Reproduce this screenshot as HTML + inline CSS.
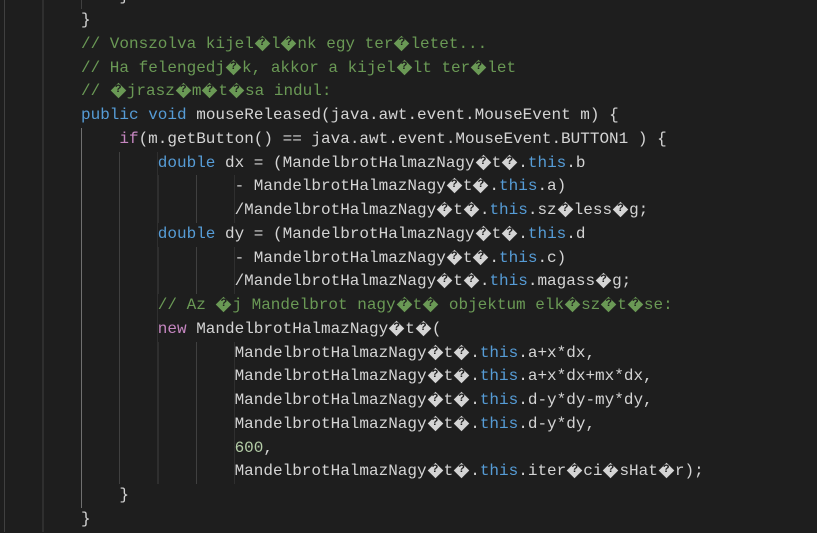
<!DOCTYPE html>
<html><head><meta charset="utf-8"><style>
html,body{margin:0;padding:0;background:#1e1e1e;width:817px;height:533px;overflow:hidden}
#c{position:absolute;left:4.2px;top:-14.6px;font-family:"Liberation Mono","DejaVu Sans Mono",monospace;font-size:16px;line-height:23.76px;color:#d4d4d4}
.l{height:23.76px;white-space:pre}
.i{display:inline-block;height:23.76px;vertical-align:top;background:repeating-linear-gradient(to right,#404040 0 1px,transparent 1px 38.4px)}
.c{color:#6a9955}.k{color:#569cd6}.p{color:#c586c0}.n{color:#b5cea8}
#a{position:absolute;left:81px;top:128px;width:1px;height:380px;background:#707070}
.r{display:inline-block;width:17px;height:23.76px;vertical-align:top;position:relative}
.r::before{content:"";position:absolute;left:3px;top:5px;width:11px;height:11px;background:#d4d4d4;transform:rotate(45deg)}
.c .r::before{background:#6a9955}
.r::after{content:"?";position:absolute;left:0;width:17px;top:0;text-align:center;font-size:11px;line-height:21px;color:#1e1e1e;font-weight:bold}
</style></head><body><div id="c"><div class="l"><span class="i" style="width:115.2px"></span>}</div><div class="l"><span class="i" style="width:76.8px"></span>}</div><div class="l"><span class="i" style="width:76.8px"></span><span class="c">// Vonszolva kijel<b class="r"></b>l<b class="r"></b>nk egy ter<b class="r"></b>letet...</span></div><div class="l"><span class="i" style="width:76.8px"></span><span class="c">// Ha felengedj<b class="r"></b>k, akkor a kijel<b class="r"></b>lt ter<b class="r"></b>let</span></div><div class="l"><span class="i" style="width:76.8px"></span><span class="c">// <b class="r"></b>jrasz<b class="r"></b>m<b class="r"></b>t<b class="r"></b>sa indul:</span></div><div class="l"><span class="i" style="width:76.8px"></span><span class="k">public</span> <span class="k">void</span> mouseReleased(java.awt.event.MouseEvent m) {</div><div class="l"><span class="i" style="width:115.2px"></span><span class="p">if</span>(m.getButton() == java.awt.event.MouseEvent.BUTTON1 ) {</div><div class="l"><span class="i" style="width:153.6px"></span><span class="k">double</span> dx = (MandelbrotHalmazNagy<b class="r"></b>t<b class="r"></b>.<span class="k">this</span>.b</div><div class="l"><span class="i" style="width:230.4px"></span>- MandelbrotHalmazNagy<b class="r"></b>t<b class="r"></b>.<span class="k">this</span>.a)</div><div class="l"><span class="i" style="width:230.4px"></span>/MandelbrotHalmazNagy<b class="r"></b>t<b class="r"></b>.<span class="k">this</span>.sz<b class="r"></b>less<b class="r"></b>g;</div><div class="l"><span class="i" style="width:153.6px"></span><span class="k">double</span> dy = (MandelbrotHalmazNagy<b class="r"></b>t<b class="r"></b>.<span class="k">this</span>.d</div><div class="l"><span class="i" style="width:230.4px"></span>- MandelbrotHalmazNagy<b class="r"></b>t<b class="r"></b>.<span class="k">this</span>.c)</div><div class="l"><span class="i" style="width:230.4px"></span>/MandelbrotHalmazNagy<b class="r"></b>t<b class="r"></b>.<span class="k">this</span>.magass<b class="r"></b>g;</div><div class="l"><span class="i" style="width:153.6px"></span><span class="c">// Az <b class="r"></b>j Mandelbrot nagy<b class="r"></b>t<b class="r"></b> objektum elk<b class="r"></b>sz<b class="r"></b>t<b class="r"></b>se:</span></div><div class="l"><span class="i" style="width:153.6px"></span><span class="p">new</span> MandelbrotHalmazNagy<b class="r"></b>t<b class="r"></b>(</div><div class="l"><span class="i" style="width:230.4px"></span>MandelbrotHalmazNagy<b class="r"></b>t<b class="r"></b>.<span class="k">this</span>.a+x*dx,</div><div class="l"><span class="i" style="width:230.4px"></span>MandelbrotHalmazNagy<b class="r"></b>t<b class="r"></b>.<span class="k">this</span>.a+x*dx+mx*dx,</div><div class="l"><span class="i" style="width:230.4px"></span>MandelbrotHalmazNagy<b class="r"></b>t<b class="r"></b>.<span class="k">this</span>.d-y*dy-my*dy,</div><div class="l"><span class="i" style="width:230.4px"></span>MandelbrotHalmazNagy<b class="r"></b>t<b class="r"></b>.<span class="k">this</span>.d-y*dy,</div><div class="l"><span class="i" style="width:230.4px"></span><span class="n">600</span>,</div><div class="l"><span class="i" style="width:230.4px"></span>MandelbrotHalmazNagy<b class="r"></b>t<b class="r"></b>.<span class="k">this</span>.iter<b class="r"></b>ci<b class="r"></b>sHat<b class="r"></b>r);</div><div class="l"><span class="i" style="width:115.2px"></span>}</div><div class="l"><span class="i" style="width:76.8px"></span>}</div></div><div id="a"></div></body></html>
